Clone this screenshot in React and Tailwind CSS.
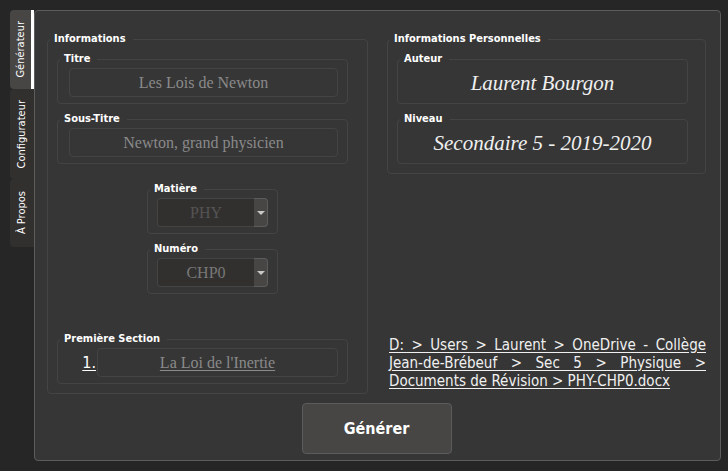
import React, { useState } from "react";
import clsx from "clsx";

const SANS = "font-['DejaVu_Sans_Condensed','Noto_Sans',sans-serif]";
const SERIF = "font-['Liberation_Serif',serif]";

function Group({ title, className, children }) {
  return (
    <fieldset className={clsx("min-w-0 rounded-[4px] border border-[#444444]", className)}>
      <legend className="ml-0.5 pr-[7px] pl-1 text-[11px] leading-[14px] font-bold text-white">{title}</legend>
      {children}
    </fieldset>
  );
}

function Field({ title, defaultValue, prefix, underline }) {
  return (
    <Group title={title}>
      <div className="flex items-center pt-0.5 pr-[9px] pb-1.5 pl-[11px]">
        {prefix && (
          <span className="w-7 pr-px text-right text-base leading-5 text-white underline underline-offset-2">{prefix}</span>
        )}
        <input
          aria-label={title}
          defaultValue={defaultValue}
          className={clsx(
            "h-[29px] min-w-0 flex-1 rounded-[4px] border border-[#444444] bg-transparent text-center text-base text-[#8a8a8a] outline-none",
            SERIF,
            underline && "underline underline-offset-2"
          )}
        />
      </div>
    </Group>
  );
}

function Combo({ title, options, disabled }) {
  return (
    <Group title={title} className="w-[131px]">
      <div className="flex pt-0.5 pr-[9px] pb-1.5 pl-[9px]">
        <select
          aria-label={title}
          disabled={disabled}
          className={clsx(
            "h-[29px] min-w-0 flex-1 appearance-none rounded-l-[4px] border border-r-0 border-[#444444] bg-[#32302f] text-center text-base opacity-100 outline-none",
            SERIF,
            disabled ? "text-[#545454]" : "text-[#787878]"
          )}
        >
          {options.map((o) => (
            <option key={o}>{o}</option>
          ))}
        </select>
        <span className="flex w-3.5 items-center justify-center rounded-r-[4px] border border-l-0 border-[#5c5c5c] bg-[#484644]">
          <svg width="8" height="4" viewBox="0 0 8 4" className="fill-[#c8c8c8]" aria-hidden="true">
            <path d="M0 0h8L4 4z" />
          </svg>
        </span>
      </div>
    </Group>
  );
}

function Signature({ title, defaultValue }) {
  return (
    <Group title={title}>
      <div className="flex px-1 pt-0.5 pb-1.5">
        <input
          aria-label={title}
          defaultValue={defaultValue}
          className={clsx(
            "h-[29px] min-w-0 flex-1 bg-transparent pt-0.5 text-center text-[21px] text-[#f0f0f0] italic outline-none",
            SERIF
          )}
        />
      </div>
    </Group>
  );
}

const TABS = [
  { name: "Générateur", height: "h-[79px]" },
  { name: "Configurateur", height: "h-[90px]" },
  { name: "À Propos", height: "h-[68px]" },
];

export default function App() {
  const [active, setActive] = useState("Générateur");
  return (
    <main className={clsx("flex min-h-screen bg-[#262626] pt-2.5 pr-[7px] pb-2.5 pl-2.5 text-white", SANS)}>
      <nav className="flex w-6 shrink-0 flex-col">
        {TABS.map((t) => (
          <button
            key={t.name}
            type="button"
            onClick={() => setActive(t.name)}
            className={clsx(
              "flex items-center justify-center rounded-l-[4px] text-[11px] leading-4 text-white",
              t.height,
              active === t.name ? "border-r-3 border-white bg-[#484644]" : "bg-[#32302f]"
            )}
          >
            <span className="rotate-180 [writing-mode:vertical-rl]">{t.name}</span>
          </button>
        ))}
      </nav>
      <section className="flex min-w-0 flex-1 flex-col rounded-[4px] border border-[#5c5c5c] bg-[#363636] pt-[21px] pr-3.5 pb-1.5 pl-3">
        <div className="grid grid-cols-[321fr_319fr] gap-[19px]">
          <Group title="Informations">
            <div className="flex flex-col pt-1.5 pr-[19px] pb-[9px] pl-[9px]">
              <div className="flex flex-col gap-2">
                <Field title="Titre" defaultValue="Les Lois de Newton" />
                <Field title="Sous-Titre" defaultValue="Newton, grand physicien" />
              </div>
              <div className="flex flex-col items-center gap-2 pt-[18px] pb-[38px] pl-5">
                <Combo title="Matière" options={["PHY"]} disabled />
                <Combo title="Numéro" options={["CHP0", "CHP1", "CHP2"]} />
              </div>
              <Field title="Première Section" defaultValue="La Loi de l'Inertie" prefix="1." underline />
            </div>
          </Group>
          <div className="flex min-w-0 flex-col justify-between">
            <Group title="Informations Personnelles">
              <div className="flex flex-col gap-2 pt-1.5 pr-[17px] pb-[9px] pl-[9px]">
                <Signature title="Auteur" defaultValue="Laurent Bourgon" />
                <Signature title="Niveau" defaultValue="Secondaire 5 - 2019-2020" />
              </div>
            </Group>
            <a href="#document" className="mb-1 ml-0.5 text-justify text-[15px] leading-[18px] text-[#f0f0f0] underline underline-offset-2">
              D: &gt; Users &gt; Laurent &gt; OneDrive - Collège Jean-de-Brébeuf &gt; Sec 5 &gt; Physique &gt; Documents de Révision &gt; PHY-CHP0.docx
            </a>
          </div>
        </div>
        <button
          type="button"
          className="mt-[9px] h-[51px] w-[150px] self-center rounded-[4px] border border-[#5c5c5c] bg-[#484644] text-base font-bold text-white"
        >
          Générer
        </button>
      </section>
    </main>
  );
}
